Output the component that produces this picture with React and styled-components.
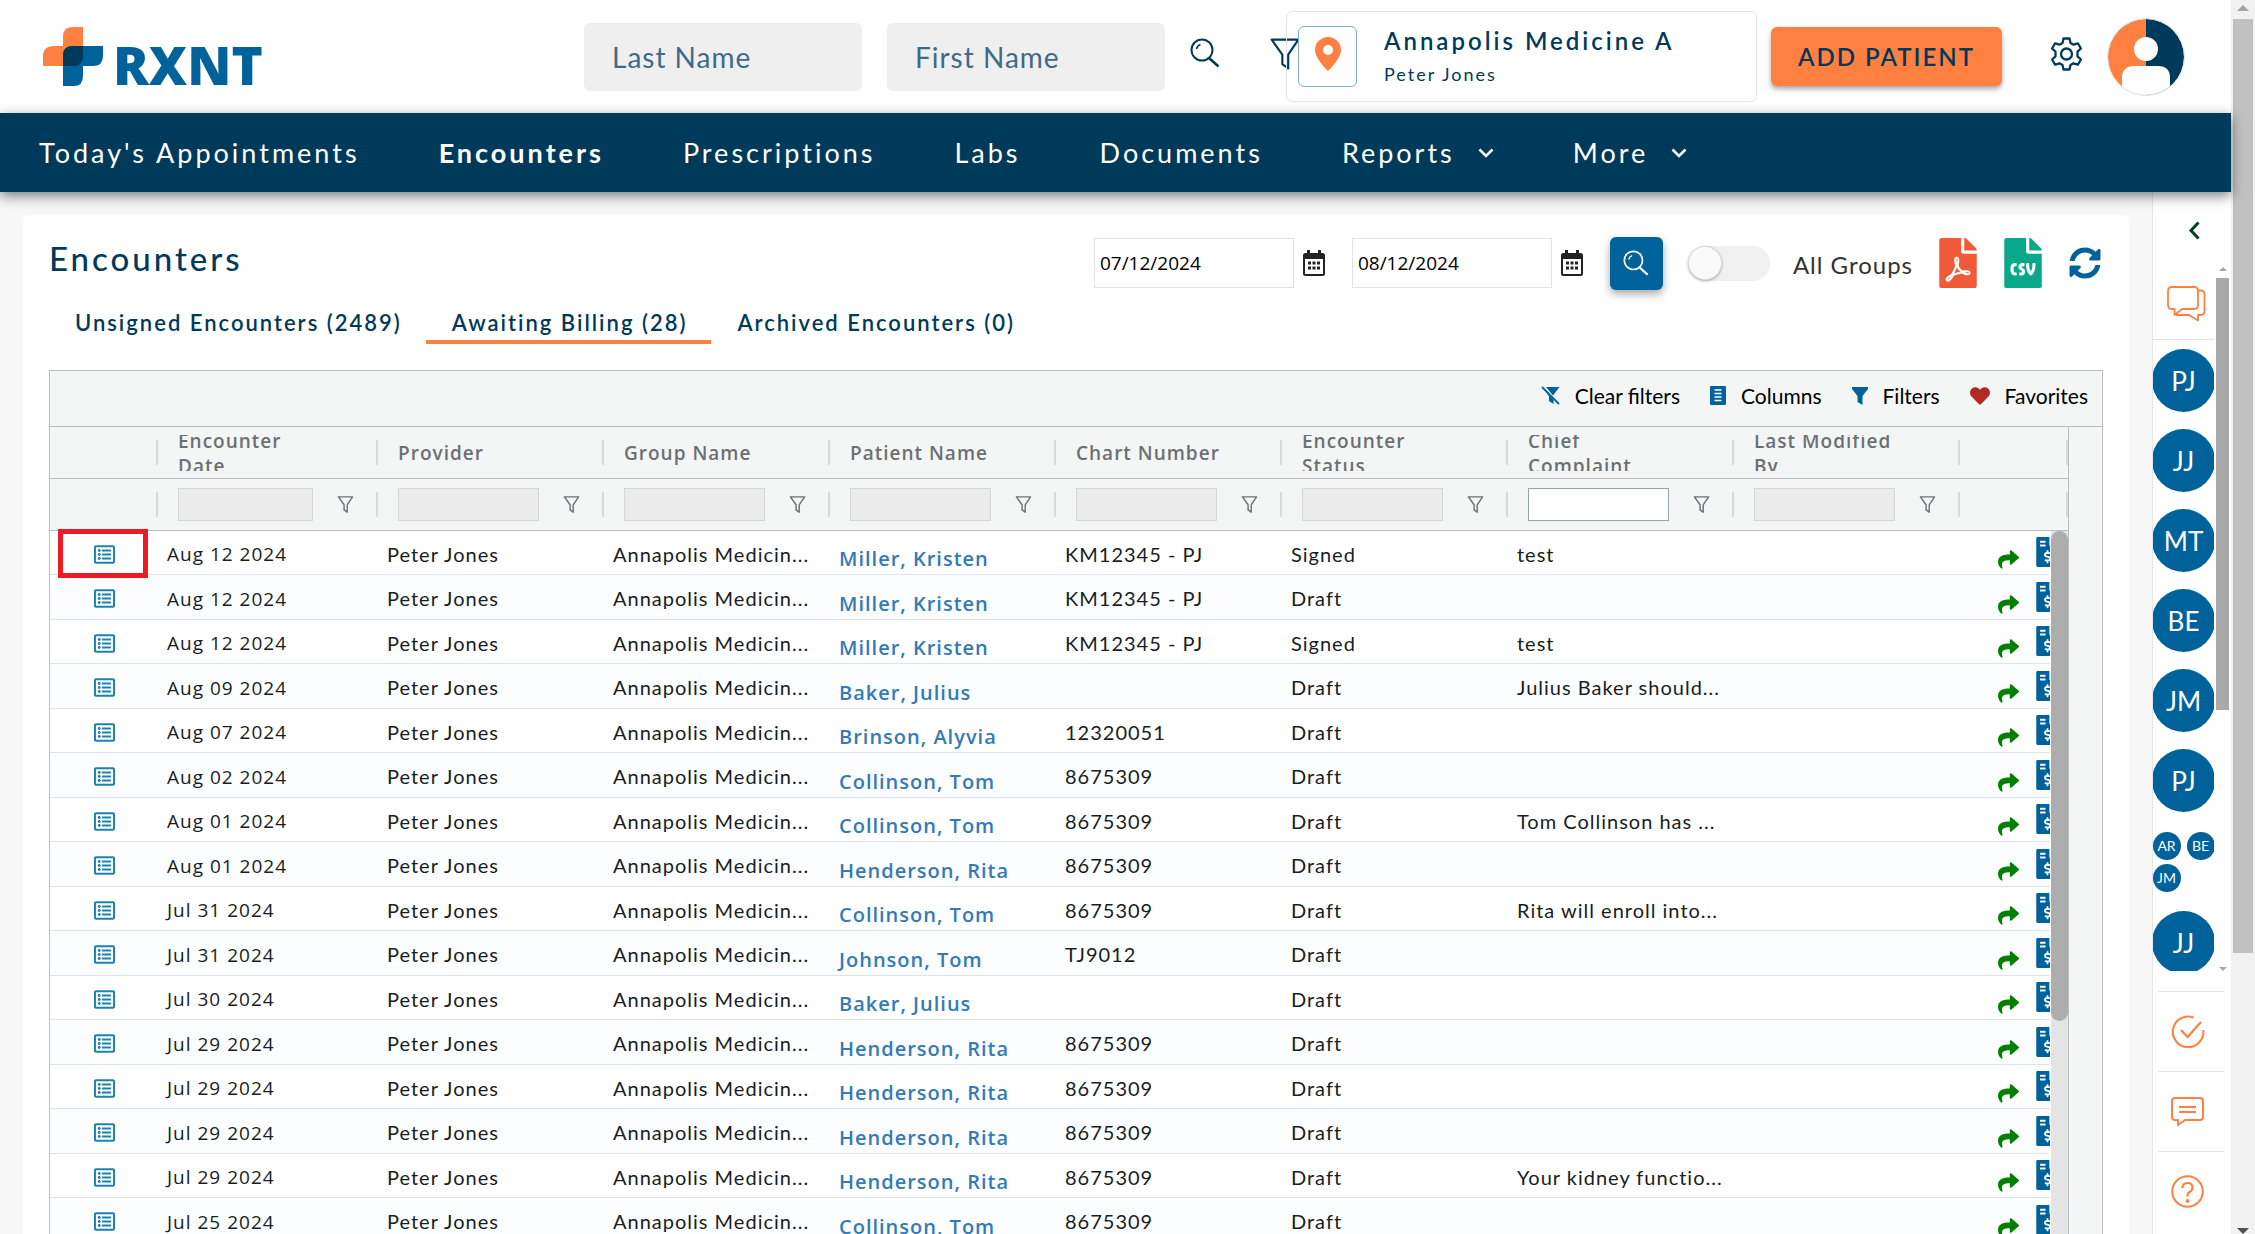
import React from "react";
import styled, { createGlobalStyle, css } from "styled-components";
import { FaFileInvoiceDollar, FaShare, FaHeart, FaFilePdf, FaFileCsv, FaSyncAlt, FaRegListAlt } from "react-icons/fa";

const BRAND = '"Lato", "Noto Sans", sans-serif';
const SYSTEM = '"Open Sans", "Noto Sans", sans-serif';
const NAVY = "#003a5b";
const BLUE = "#00629b";
const ORANGE = "#ff8040";

const GlobalStyle = createGlobalStyle`
  *, *::before, *::after { box-sizing: border-box; }
  html, body { margin: 0; height: 100%; }
  body { overflow: hidden; background: #f7f7f7; font-family: ${BRAND}; color: ${NAVY}; }
  button, input { font: inherit; color: inherit; margin: 0; }
  button { border: 0; background: none; padding: 0; cursor: pointer; }
  a { text-decoration: none; color: inherit; }
  svg { display: block; flex: none; }
`;

const Window = styled.div`
  display: flex;
  height: 100vh;
  overflow: hidden;
`;
const Page = styled.div`
  flex: 1;
  min-width: 0;
  display: flex;
  flex-direction: column;
`;

/* ---------- window scrollbars ---------- */
const WindowScroll = styled.div`
  width: 24px;
  flex: none;
  background: #f1f1f1;
  display: flex;
  flex-direction: column;
  align-items: center;
  padding: 5px 0 0;
`;
const WindowThumb = styled.div`
  width: 20px;
  height: 76%;
  margin-top: 8px;
  margin-bottom: auto;
  background: #c1c1c1;
`;
const Triangle = styled.span`
  border: ${(p) => p.$size}px solid transparent;
  ${(p) => (p.$down ? `border-top-color: ${p.$color}; border-bottom: 0;` : `border-bottom-color: ${p.$color}; border-top: 0;`)}
`;

/* ---------- header ---------- */
const Header = styled.header`
  height: 113px;
  flex: none;
  background: #fff;
  display: flex;
  align-items: center;
  padding: 0 46px 0 43px;
`;
const Logo = styled.a`
  display: flex;
  align-items: flex-end;
  gap: 10px;
  width: 541px;
  color: ${BLUE};
  font: 800 53px/42px "Open Sans", sans-serif;
`;
const SearchForm = styled.form`
  display: flex;
  align-items: center;
  gap: 25px;
`;
const NameInput = styled.input`
  width: 278px;
  height: 68px;
  border: 0;
  border-radius: 6px;
  background: #efefef;
  padding: 0 28px;
  font-size: 28px;
  letter-spacing: 1px;
  &::placeholder { color: #3f6a85; opacity: 1; }
`;
const IconButton = styled.button`
  display: flex;
  color: ${(p) => p.$color || NAVY};
`;
const SearchButton = styled(IconButton)`
  margin-bottom: 8px;
`;
const FilterButton = styled(IconButton)`
  margin: 0 -15px 6px 24px;
`;
const Location = styled.section`
  flex: 1;
  height: 91px;
  border: 1px solid #e6e6e6;
  border-radius: 6px;
  display: flex;
  align-items: flex-start;
  padding: 14px 11px;
  gap: 27px;
`;
const PinButton = styled.button`
  width: 59px;
  height: 61px;
  border: 1px solid #7fb1cd;
  border-radius: 6px;
  display: flex;
  align-items: center;
  justify-content: center;
  padding-bottom: 6px;
  background: #fff;
`;
const Practice = styled.div`
  font-size: 24px;
  line-height: 30px;
  font-weight: 600;
  letter-spacing: 3px;
`;
const Doctor = styled.div`
  font-size: 18px;
  line-height: 36px;
  letter-spacing: 2px;
`;
const AddPatient = styled.button`
  width: 231px;
  height: 59px;
  margin-left: 14px;
  border-radius: 6px;
  background: ${ORANGE};
  box-shadow: 0 3px 5px rgba(0, 0, 0, 0.35);
  font-size: 24px;
  font-weight: 600;
  letter-spacing: 2px;
`;
const HeaderIcons = styled.div`
  display: flex;
  align-items: center;
  gap: 24px;
  margin-left: 48px;
`;
const GearButton = styled(IconButton)`
  margin-bottom: 5px;
`;

/* ---------- nav ---------- */
const Nav = styled.nav`
  height: 79px;
  flex: none;
  background: ${NAVY};
  box-shadow: 0 4px 12px rgba(0, 0, 0, 0.5);
  display: flex;
  align-items: center;
  gap: 79px;
  padding: 0 39px;
  color: #fff;
  position: relative;
  z-index: 3;
`;
const NavLink = styled.a`
  display: flex;
  align-items: center;
  gap: 23px;
  font-size: 27px;
  line-height: 40px;
  letter-spacing: 3px;
  font-weight: ${(p) => (p.$active ? 700 : 400)};
`;

/* ---------- body ---------- */
const Body = styled.div`
  flex: 1;
  min-height: 0;
  display: flex;
`;
const Card = styled.main`
  flex: 1;
  min-width: 0;
  margin: 23px 23px 0 23px;
  background: #fff;
  border-radius: 6px 6px 0 0;
  padding: 23px 26px 0;
  display: flex;
  flex-direction: column;
`;
const TitleRow = styled.div`
  display: flex;
  align-items: flex-start;
  justify-content: space-between;
  height: 70px;
`;
const Title = styled.h1`
  margin: 0;
  font-size: 33px;
  line-height: 40px;
  font-weight: 500;
  letter-spacing: 3px;
`;
const Tools = styled.div`
  display: flex;
  align-items: center;
  height: 50px;
  padding-right: 2px;
`;
const DateField = styled.label`
  display: flex;
  align-items: center;
  gap: 9px;
  margin-right: 27px;
  color: #222;
`;
const DateInput = styled.input`
  width: 200px;
  height: 50px;
  border: 1px solid #e2e2e2;
  padding: 0 5px;
  font-family: ${SYSTEM};
  font-size: 19px;
  color: #000;
`;
const GoButton = styled.button`
  width: 53px;
  height: 53px;
  border-radius: 6px;
  background: ${BLUE};
  box-shadow: 0 4px 8px rgba(0, 0, 0, 0.35);
  display: flex;
  align-items: center;
  justify-content: center;
  color: #fff;
`;
const Toggle = styled.label`
  display: flex;
  align-items: center;
  gap: 23px;
  margin: 0 26px 0 25px;
  font-size: 24px;
  line-height: 32px;
  letter-spacing: 1px;
  color: #333;
  span { padding-top: 4px; }
`;
const Switch = styled.input`
  appearance: none;
  width: 82px;
  height: 35px;
  border-radius: 18px;
  background: #f0f0f0;
  display: flex;
  align-items: center;
  &::before {
    content: "";
    width: 34px;
    height: 34px;
    border-radius: 50%;
    background: #fafafa;
    border: 1px solid #dcdcdc;
    box-shadow: 0 1px 3px rgba(0, 0, 0, 0.3);
  }
`;
const Exports = styled.div`
  display: flex;
  align-items: center;
  gap: 27px;
`;
const fileSize = css`
  width: 38px;
  height: 50px;
`;
const PdfIcon = styled(FaFilePdf)`
  ${fileSize}
`;
const CsvIcon = styled(FaFileCsv)`
  ${fileSize}
`;
const BillIcon = styled(FaFileInvoiceDollar)`
  width: 23px;
  height: 30px;
`;
const Tabs = styled.div`
  display: flex;
  height: 36px;
`;
const Tab = styled.button`
  padding: 3px 24px 5px 26px;
  font-size: 22px;
  line-height: 24px;
  font-weight: 600;
  letter-spacing: 2px;
  border-bottom: 4px solid ${(p) => (p.$active ? ORANGE : "transparent")};
`;

/* ---------- grid ---------- */
const Grid = styled.section`
  flex: 1;
  min-height: 0;
  overflow: hidden;
  margin-top: 26px;
  border: 1px solid #babfc7;
  border-bottom: 0;
  background: #f4f6f6;
`;
const GridTools = styled.div`
  height: 56px;
  border-bottom: 1px solid #babfc7;
  display: flex;
  align-items: center;
  justify-content: flex-end;
  gap: 30px;
  padding: 0 14px 6px;
`;
const GridTool = styled.button`
  display: flex;
  align-items: center;
  gap: 15px;
  font-size: 21px;
  color: #000;
`;
const GridView = styled.div`
  position: relative;
  margin-right: 33px;
  border-right: 1px solid #babfc7;
`;
const Table = styled.table`
  width: 100%;
  table-layout: fixed;
  border-collapse: separate;
  border-spacing: 0;
  text-align: left;
`;
const IconCol = styled.col`
  width: 108px;
`;
const DateCol = styled.col`
  width: 220px;
`;
const HeadCell = styled.th`
  height: 52px;
  padding: 0;
  border-bottom: 1px solid #babfc7;
  font-weight: 600;
`;
const HeadInner = styled.div`
  height: 25px;
  display: flex;
  align-items: center;
  border-right: 2px solid #d7dbde;
  padding-left: ${(p) => (p.$first ? 0 : 20)}px;
  padding-right: 22px;
  gap: 24px;
  color: #6c7074;
`;
const HeadText = styled.div`
  height: 36px;
  flex: none;
  overflow: hidden;
  width: 160px;
  padding-top: 2px;
  display: flex;
  flex-direction: column;
  justify-content: center;
  white-space: nowrap;
  font: 600 19px/25px ${SYSTEM};
  letter-spacing: 1px;
`;
const FilterInput = styled.input`
  flex: 1;
  min-width: 0;
  height: 33px;
  border: 1px solid #95a5a6;
  border-radius: 0;
  background: #fff;
  &:disabled { border-color: #d3d7d8; background: #ebebeb; }
`;
const Row = styled.tr`
  height: 44px;
  background: #fff;
  &:nth-child(even) { height: 45px; background: #fcfdfe; }
`;
const cell = css`
  padding: 2px 9px 0;
  border-bottom: 1px solid #dde2eb;
  white-space: nowrap;
  overflow: hidden;
`;
const Cell = styled.td`
  ${cell}
  font-size: 20px;
  line-height: 40px;
  letter-spacing: 1px;
  color: #181d1f;
`;
const DateCell = styled(Cell)`
  padding-top: 3px;
  font-family: ${SYSTEM};
  font-size: 19px;
`;
const PatientCell = styled(Cell)`
  padding-top: 13px;
  line-height: 30px;
  font-family: ${SYSTEM};
  font-weight: 600;
  color: #337ab7;
`;
const IconCell = styled.td`
  padding: 3px 0 0 44px;
  border-bottom: 1px solid #dde2eb;
  position: relative;
  color: #1d83ad;
`;
const Highlight = styled.div`
  position: absolute;
  inset: -2px 10px -4px 8px;
  border: 5px solid #ed1c24;
  z-index: 1;
  pointer-events: none;
`;
const ActionCell = styled.td`
  padding: 0 0 0 38px;
  border-bottom: 1px solid #dde2eb;
`;
const Actions = styled.div`
  display: flex;
  align-items: flex-start;
  gap: 17px;
  height: 31px;
  button:first-child { margin-top: 12px; }
`;
const GridScroll = styled.div`
  position: absolute;
  top: 104px;
  right: 0;
  bottom: 0;
  width: 17px;
  background: #e4e4e4;
  box-shadow: -1px 0 #fff;
  z-index: 2;
`;
const GridThumb = styled.div`
  height: 490px;
  border-radius: 9px;
  background: #adadad;
`;

/* ---------- right rail ---------- */
const Rail = styled.aside`
  width: 79px;
  flex: none;
  background: #fff;
  border-left: 1px solid #e6e6e6;
  display: flex;
  flex-direction: column;
`;
const RailToggle = styled.button`
  height: 75px;
  padding: 29px 0 0 35px;
  display: flex;
  color: #00401f;
`;
const RailChats = styled.div`
  display: flex;
  justify-content: space-between;
  height: 704px;
  padding-right: 2px;
`;
const RailList = styled.div`
  width: 61px;
  overflow: hidden;
  display: flex;
  flex-direction: column;
  align-items: center;
  gap: 17px;
`;
const ChatHead = styled.div`
  height: 73px;
  flex: none;
  width: 100%;
  margin-bottom: -8px;
  padding: 19px 0 0 14px;
  border-bottom: 1px solid #e2e2e2;
`;
const Initials = styled.button`
  width: 63px;
  height: 63px;
  flex: none;
  border-radius: 50%;
  background: ${BLUE};
  color: #fff;
  font-size: 26px;
`;
const Group = styled.div`
  display: grid;
  grid-template-columns: 28px 28px;
  column-gap: 6px;
  row-gap: 4px;
  align-content: center;
  height: 65px;
  flex: none;
`;
const SmallInitials = styled(Initials)`
  width: 28px;
  height: 28px;
  font-size: 14px;
`;
const RailScroll = styled.div`
  width: 13px;
  display: flex;
  flex-direction: column;
  align-items: center;
`;
const RailThumb = styled.div`
  width: 13px;
  height: 432px;
  margin-top: 7px;
  margin-bottom: auto;
  background: #a9a9a9;
`;
const RailAction = styled.button`
  height: 80px;
  margin: 0 7px 0 5px;
  display: flex;
  align-items: center;
  padding-left: 13px;
  border-top: 1px solid #e2e2e2;
  color: ${ORANGE};
`;
const RailActions = styled.div`
  display: flex;
  flex-direction: column;
  margin-top: 20px;
`;

/* ---------- drawings ---------- */
const LogoMark = () => (
  <svg width="60" height="59" viewBox="0 0 60 59" aria-hidden="true">
    <path fill={ORANGE} d="M29 0h11v39H0V29Q0 19 11 19h9V10Q20 0 29 0z" />
    <path fill={BLUE} d="M20 59V29q0-10 9-10h31v10q0 10-10 10H40v10q0 10-9 10z" />
    <path fill={NAVY} d="M20 39V29q0-10 9-10h11v10q0 10-10 10z" />
  </svg>
);
const Magnifier = ({ size = 30 }) => (
  <svg width={size} height={size} viewBox="0 0 30 30" fill="none" stroke="currentColor" strokeWidth="2" aria-hidden="true">
    <circle cx="12" cy="12" r="10.500" />
    <path d="M19 20l9.500 8.500" strokeWidth="2.500" />
    <path d="M6.500 11a6 6 0 0 1 4-4.500" strokeWidth="1.500" />
  </svg>
);
const Funnel = ({ size = 30, weight = 2 }) => (
  <svg width={size} height={size} viewBox="0 0 28 30" fill="none" stroke="currentColor" strokeWidth={weight} strokeLinejoin="round" aria-hidden="true">
    <path d="M1.500 1.500h25l-9.500 14v13l-5.500-4v-9z" />
  </svg>
);
const Pin = () => (
  <svg width="26" height="34" viewBox="0 0 26 34" aria-hidden="true">
    <path fill={ORANGE} fillRule="evenodd" d="M13 0a13 13 0 0 1 13 13c0 9-13 21-13 21S0 22 0 13A13 13 0 0 1 13 0zm0 8a5 5 0 1 0 0 10 5 5 0 0 0 0-10z" />
  </svg>
);
const Gear = () => (
  <svg width="33" height="34" viewBox="0 0 33 34" fill="none" stroke="currentColor" strokeWidth="2.300" strokeLinejoin="round" aria-hidden="true">
    <path d="M13.500 1.500h6l1 4.500 3 1.700 4.400-1.400 3 5.200-3.400 3.200v4.600l3.400 3.200-3 5.200-4.400-1.400-3 1.700-1 4.500h-6l-1-4.500-3-1.700-4.400 1.400-3-5.200 3.400-3.200v-4.600L2.100 11.500l3-5.200 4.400 1.400 3-1.700z" />
    <circle cx="16.500" cy="17" r="5.500" />
  </svg>
);
const Avatar = () => (
  <svg width="78" height="80" viewBox="0 0 78 78" aria-hidden="true">
    <clipPath id="disc"><circle cx="39" cy="39" r="38" /></clipPath>
    <g clipPath="url(#disc)">
      <path fill={ORANGE} d="M0 0h39v78H0z" />
      <path fill={NAVY} d="M39 0h39v78H39z" />
      <circle cx="39" cy="31" r="12" fill="#fff" />
      <path fill="#fff" d="M15 78V60q0-12 12-12h24q12 0 12 12v18z" />
    </g>
    <circle cx="39" cy="39" r="38.500" fill="none" stroke="#dfe3e6" />
  </svg>
);
const Chevron = () => (
  <svg width="16" height="10" viewBox="0 0 16 10" fill="none" stroke="currentColor" strokeWidth="2.500" aria-hidden="true">
    <path d="M1.500 1.500L8 8l6.500-6.500" />
  </svg>
);
const ChevronLeft = () => (
  <svg width="12" height="19" viewBox="0 0 12 19" fill="none" stroke="currentColor" strokeWidth="3" aria-hidden="true">
    <path d="M10.500 1.500L3 9.500l7.500 8" />
  </svg>
);
const Calendar = () => (
  <svg width="22" height="26" viewBox="0 0 22 26" aria-hidden="true">
    <path fill="currentColor" fillRule="evenodd" d="M4 0h3v3h8V0h3v3h1.500A2.500 2.500 0 0 1 22 5.500v18a2.500 2.500 0 0 1-2.500 2.500h-17A2.500 2.500 0 0 1 0 23.500v-18A2.500 2.500 0 0 1 2.500 3H4zM2 9v15h18V9z" />
    <path stroke="currentColor" strokeWidth="3" strokeDasharray="3 1.500" d="M5 13h12M5 18h12" />
  </svg>
);
const ClearFilter = () => (
  <svg width="19" height="19" viewBox="0 0 19 19" aria-hidden="true">
    <path fill={BLUE} d="M5 1h13.500L12 9.500zM4.500 5.500l8 8V18L8 15v-4.500z" />
    <path stroke={BLUE} strokeWidth="1.800" d="M1 1l17 17" />
  </svg>
);
const SolidFilter = () => (
  <svg width="16" height="18" viewBox="0 0 16 18" aria-hidden="true">
    <path fill={BLUE} d="M0 0h16v2l-5.500 7v9L5.500 15V9L0 2z" />
  </svg>
);
const ColumnsIcon = () => (
  <svg width="16" height="19" viewBox="0 0 16 19" aria-hidden="true">
    <rect width="16" height="19" rx="1" fill={BLUE} />
    <path stroke="#fff" strokeWidth="1.300" d="M4.500 4h7M4.500 7.500h7M4.500 11h7M4.500 14.500h7" />
  </svg>
);
const Chats = () => (
  <svg width="39" height="36" viewBox="0 0 39 36" fill="none" stroke={ORANGE} strokeWidth="1.800" strokeLinejoin="round" aria-hidden="true">
    <path d="M5 1h22q4 0 4 4v14q0 4-4 4H15l-7.500 6v-6H5q-4 0-4-4V5q0-4 4-4z" />
    <path d="M31 4.500h2.500q4 0 4 4V25q0 4-4 4H31v5.500L22 29H9" />
  </svg>
);
const CheckRing = () => (
  <svg width="34" height="34" viewBox="0 0 34 34" fill="none" stroke="currentColor" strokeWidth="2" aria-hidden="true">
    <path d="M22.500 2.500A15.300 15.300 0 1 0 32.300 15" />
    <path d="M10 15l6.500 7L30 7" strokeWidth="2.200" />
  </svg>
);
const Message = () => (
  <svg width="33" height="29" viewBox="0 0 33 29" fill="none" stroke="currentColor" strokeWidth="2" strokeLinejoin="round" aria-hidden="true">
    <path d="M4 1h25q3 0 3 3v16q0 3-3 3H14l-7 5v-5H4q-3 0-3-3V4q0-3 3-3zM8 10h17M8 15h17" />
  </svg>
);
const Help = () => (
  <svg width="33" height="33" viewBox="0 0 33 33" fill="none" stroke="currentColor" strokeWidth="2" aria-hidden="true">
    <circle cx="16.500" cy="16.500" r="15.300" />
    <path d="M11.500 13q0-5 5-5t5 4.500q0 3-3 4.500-2 1-2 3.500v1" strokeWidth="2.200" />
    <circle cx="16.500" cy="26" r="1" fill="currentColor" />
  </svg>
);

/* ---------- data ---------- */
const NAV = ["Today's Appointments", "Encounters", "Prescriptions", "Labs", "Documents", "Reports", "More"];
const COLUMNS = [["Encounter", "Date"], ["Provider"], ["Group Name"], ["Patient Name"], ["Chart Number"], ["Encounter", "Status"], ["Chief", "Complaint"], ["Last Modified", "By"]];
const ROWS = [
  ["Aug 12 2024", "Miller, Kristen", "KM12345 - PJ", "Signed", "test"],
  ["Aug 12 2024", "Miller, Kristen", "KM12345 - PJ", "Draft", ""],
  ["Aug 12 2024", "Miller, Kristen", "KM12345 - PJ", "Signed", "test"],
  ["Aug 09 2024", "Baker, Julius", "", "Draft", "Julius Baker should..."],
  ["Aug 07 2024", "Brinson, Alyvia", "12320051", "Draft", ""],
  ["Aug 02 2024", "Collinson, Tom", "8675309", "Draft", ""],
  ["Aug 01 2024", "Collinson, Tom", "8675309", "Draft", "Tom Collinson has ..."],
  ["Aug 01 2024", "Henderson, Rita", "8675309", "Draft", ""],
  ["Jul 31 2024", "Collinson, Tom", "8675309", "Draft", "Rita will enroll into..."],
  ["Jul 31 2024", "Johnson, Tom", "TJ9012", "Draft", ""],
  ["Jul 30 2024", "Baker, Julius", "", "Draft", ""],
  ["Jul 29 2024", "Henderson, Rita", "8675309", "Draft", ""],
  ["Jul 29 2024", "Henderson, Rita", "8675309", "Draft", ""],
  ["Jul 29 2024", "Henderson, Rita", "8675309", "Draft", ""],
  ["Jul 29 2024", "Henderson, Rita", "8675309", "Draft", "Your kidney functio..."],
  ["Jul 25 2024", "Collinson, Tom", "8675309", "Draft", ""],
];
const CONTACTS = ["PJ", "JJ", "MT", "BE", "JM", "PJ"];

function EncounterGrid() {
  return (
    <Grid>
      <GridTools>
        <GridTool><ClearFilter />Clear filters</GridTool>
        <GridTool><ColumnsIcon />Columns</GridTool>
        <GridTool><SolidFilter />Filters</GridTool>
        <GridTool><FaHeart size={20} color="#b02a25" />Favorites</GridTool>
      </GridTools>
      <GridView>
        <Table>
          <colgroup>
            <IconCol />
            <DateCol />
            {COLUMNS.slice(1).map((c) => <col key={c.join(" ")} />)}
            <IconCol />
          </colgroup>
          <thead>
            <tr>
              <HeadCell><HeadInner $first /></HeadCell>
              {COLUMNS.map((lines) => (
                <HeadCell key={lines.join(" ")} scope="col">
                  <HeadInner><HeadText>{lines.map((l) => <span key={l}>{l}</span>)}</HeadText></HeadInner>
                </HeadCell>
              ))}
              <HeadCell><HeadInner $first /></HeadCell>
            </tr>
            <tr>
              <HeadCell><HeadInner $first /></HeadCell>
              {COLUMNS.map((lines) => (
                <HeadCell key={lines.join(" ")}>
                  <HeadInner>
                    <FilterInput aria-label={`Filter ${lines.join(" ")}`} disabled={lines[0] !== "Chief"} />
                    <IconButton $color="#6c7074" aria-label={`${lines.join(" ")} filter menu`}><Funnel size={17} weight={2.5} /></IconButton>
                  </HeadInner>
                </HeadCell>
              ))}
              <HeadCell><HeadInner $first /></HeadCell>
            </tr>
          </thead>
          <tbody>
            {ROWS.map(([date, patient, chart, status, complaint], i) => (
              <Row key={i}>
                <IconCell>
                  <IconButton $color="inherit" aria-label="Open encounter"><FaRegListAlt size={21} /></IconButton>
                  {i === 0 && <Highlight />}
                </IconCell>
                <DateCell>{date}</DateCell>
                <Cell>Peter Jones</Cell>
                <Cell>Annapolis Medicin...</Cell>
                <PatientCell><a href="#patient">{patient}</a></PatientCell>
                <Cell>{chart}</Cell>
                <Cell>{status}</Cell>
                <Cell>{complaint}</Cell>
                <Cell />
                <ActionCell>
                  <Actions>
                    <IconButton $color="#008000" aria-label="Forward"><FaShare size={21} /></IconButton>
                    <IconButton $color={BLUE} aria-label="Bill"><BillIcon /></IconButton>
                  </Actions>
                </ActionCell>
              </Row>
            ))}
          </tbody>
        </Table>
        <GridScroll><GridThumb /></GridScroll>
      </GridView>
    </Grid>
  );
}

export default function App() {
  return (
    <Window>
      <GlobalStyle />
      <Page>
        <Header>
          <Logo href="#home" aria-label="RXNT"><LogoMark />RXNT</Logo>
          <SearchForm>
            <NameInput placeholder="Last Name" aria-label="Last Name" />
            <NameInput placeholder="First Name" aria-label="First Name" />
            <SearchButton type="button" aria-label="Search patients"><Magnifier /></SearchButton>
            <FilterButton type="button" aria-label="Filter patients"><Funnel size={32} /></FilterButton>
          </SearchForm>
          <Location>
            <PinButton aria-label="Change location"><Pin /></PinButton>
            <div>
              <Practice>Annapolis Medicine A</Practice>
              <Doctor>Peter Jones</Doctor>
            </div>
          </Location>
          <AddPatient>ADD PATIENT</AddPatient>
          <HeaderIcons>
            <GearButton aria-label="Settings"><Gear /></GearButton>
            <IconButton aria-label="Account"><Avatar /></IconButton>
          </HeaderIcons>
        </Header>
        <Nav>
          {NAV.map((n) => (
            <NavLink key={n} href="#nav" $active={n === "Encounters"}>
              {n}{(n === "Reports" || n === "More") && <Chevron />}
            </NavLink>
          ))}
        </Nav>
        <Body>
          <Card>
            <TitleRow>
              <Title>Encounters</Title>
              <Tools>
                <DateField><DateInput aria-label="From date" defaultValue="07/12/2024" /><Calendar /></DateField>
                <DateField><DateInput aria-label="To date" defaultValue="08/12/2024" /><Calendar /></DateField>
                <GoButton aria-label="Search encounters"><Magnifier size={26} /></GoButton>
                <Toggle><Switch type="checkbox" /><span>All Groups</span></Toggle>
                <Exports>
                  <IconButton $color="#f15a38" aria-label="Export PDF"><PdfIcon /></IconButton>
                  <IconButton $color="#0aa88b" aria-label="Export CSV"><CsvIcon /></IconButton>
                  <IconButton $color={BLUE} aria-label="Refresh"><FaSyncAlt size={32} /></IconButton>
                </Exports>
              </Tools>
            </TitleRow>
            <Tabs>
              <Tab>Unsigned Encounters (2489)</Tab>
              <Tab $active>Awaiting Billing (28)</Tab>
              <Tab>Archived Encounters (0)</Tab>
            </Tabs>
            <EncounterGrid />
          </Card>
          <Rail>
            <RailToggle aria-label="Expand panel"><ChevronLeft /></RailToggle>
            <RailChats>
              <RailList>
                <ChatHead><Chats /></ChatHead>
                {CONTACTS.map((c, i) => <Initials key={i}>{c}</Initials>)}
                <Group>
                  <SmallInitials>AR</SmallInitials>
                  <SmallInitials>BE</SmallInitials>
                  <SmallInitials>JM</SmallInitials>
                </Group>
                <Initials>JJ</Initials>
              </RailList>
              <RailScroll>
                <Triangle $size={4} $color="#a9a9a9" />
                <RailThumb />
                <Triangle $size={4} $color="#a9a9a9" $down />
              </RailScroll>
            </RailChats>
            <RailActions>
              <RailAction aria-label="Tasks"><CheckRing /></RailAction>
              <RailAction aria-label="Messages"><Message /></RailAction>
              <RailAction aria-label="Help"><Help /></RailAction>
            </RailActions>
          </Rail>
        </Body>
      </Page>
      <WindowScroll>
        <Triangle $size={6} $color="#a3a3a3" />
        <WindowThumb />
        <Triangle $size={6} $color="#505050" $down />
      </WindowScroll>
    </Window>
  );
}
